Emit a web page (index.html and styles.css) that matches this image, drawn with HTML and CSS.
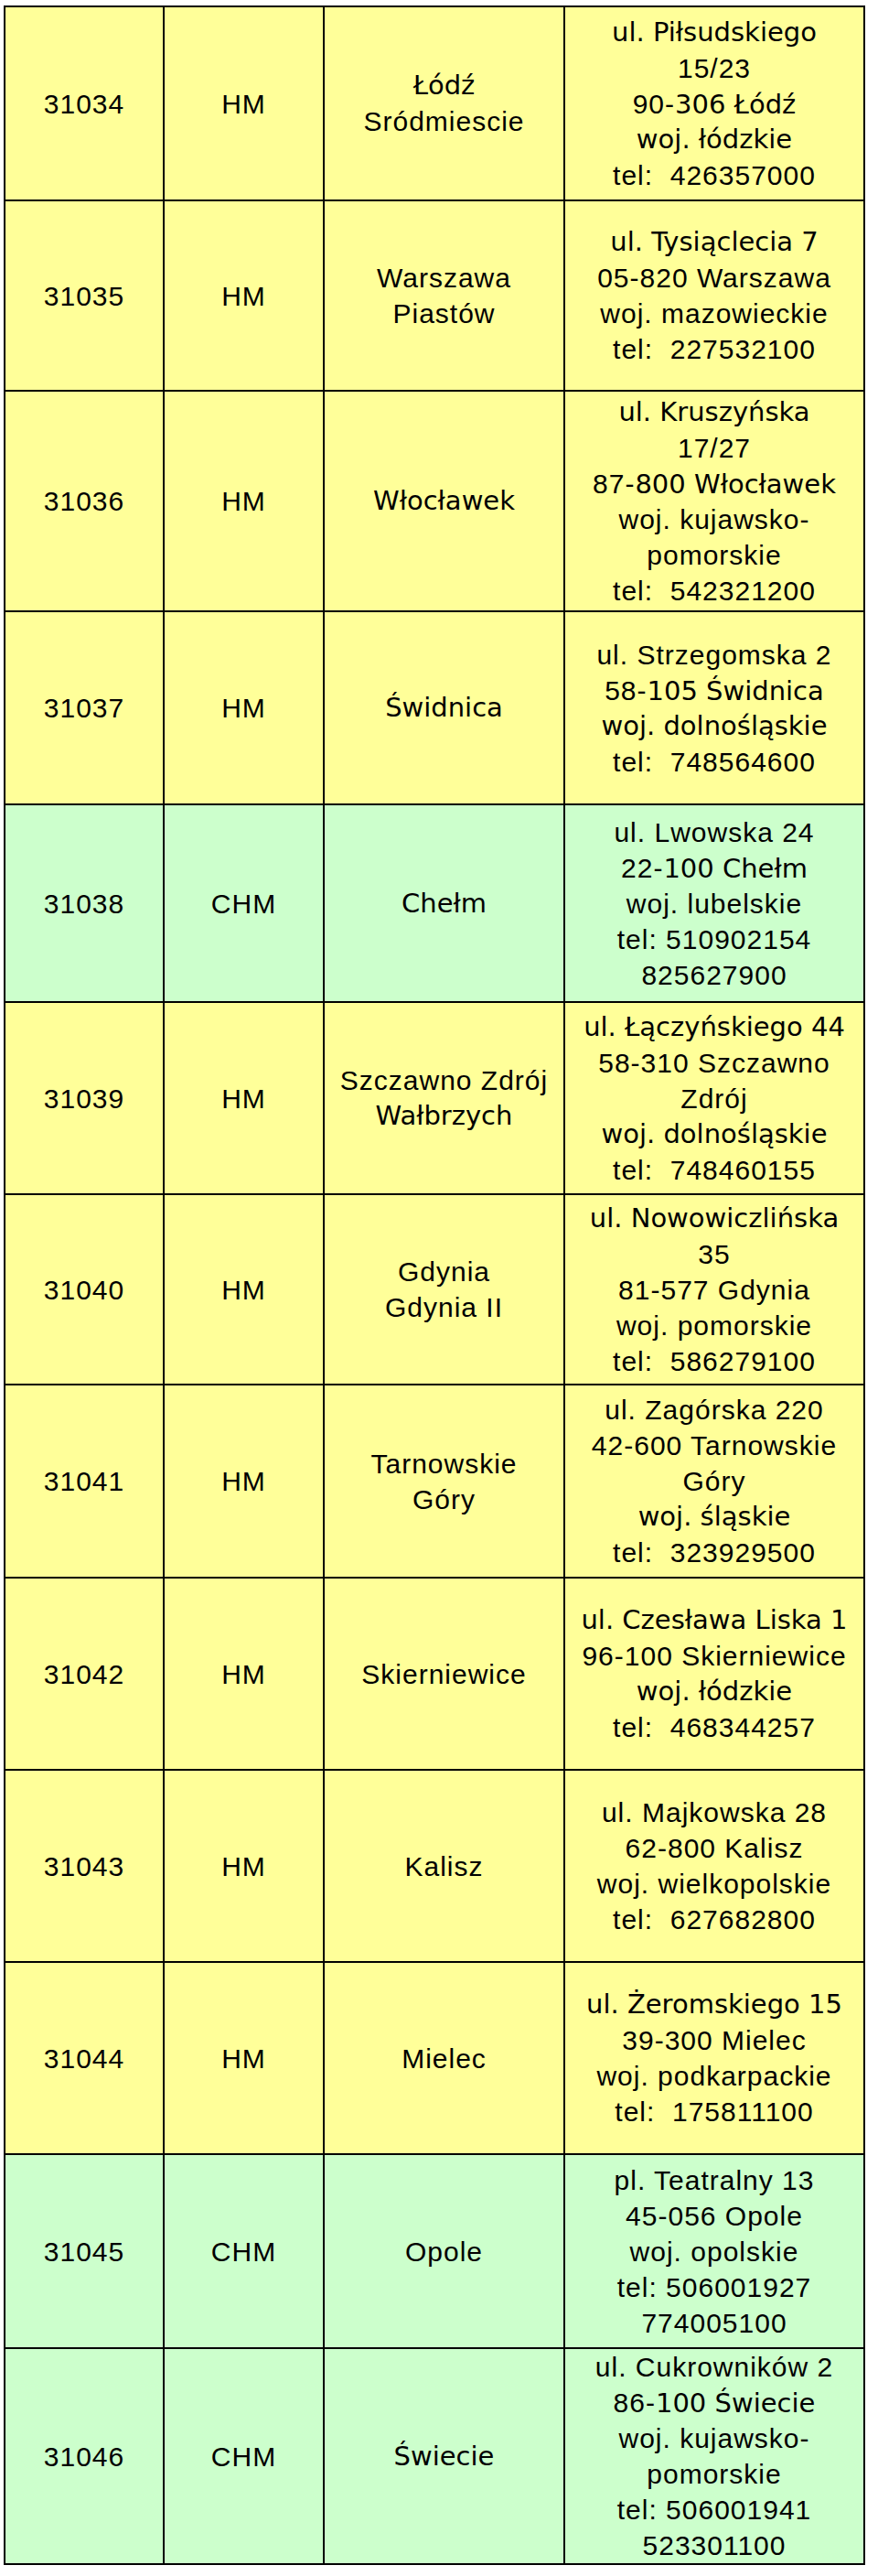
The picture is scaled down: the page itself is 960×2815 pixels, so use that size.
FILE: index.html
```html
<!DOCTYPE html>
<html lang="pl">
<head>
<meta charset="utf-8">
<title>Lista placówek</title>
<link rel="stylesheet" href="styles.css">
</head>
<body>
<div class="sheet">
  <div class="row yellow">
    <div class="cell">31034</div>
    <div class="cell">HM</div>
    <div class="cell"><div class="t">Łódź</div><div>Sródmiescie</div></div>
    <div class="cell addr">
      <div class="t">ul. Piłsudskiego</div>
      <div>15/23</div>
      <div>90-<span class="t">306 Łódź</span></div>
      <div class="t">woj. łódzkie</div>
      <div>tel:&nbsp; 426357000</div>
    </div>
  </div>
  <div class="row yellow">
    <div class="cell">31035</div>
    <div class="cell">HM</div>
    <div class="cell"><div>Warszawa</div><div>Piastów</div></div>
    <div class="cell addr">
      <div class="t">ul. Tysiąclecia 7</div>
      <div>05-820 Warszawa</div>
      <div>woj. mazowieckie</div>
      <div>tel:&nbsp; 227532100</div>
    </div>
  </div>
  <div class="row yellow">
    <div class="cell">31036</div>
    <div class="cell">HM</div>
    <div class="cell"><div class="t">Włocławek</div></div>
    <div class="cell addr">
      <div class="t">ul. Kruszyńska</div>
      <div>17/27</div>
      <div>87-<span class="t">800 Włocławek</span></div>
      <div>woj. kujawsko-</div>
      <div>pomorskie</div>
      <div>tel:&nbsp; 542321200</div>
    </div>
  </div>
  <div class="row yellow">
    <div class="cell">31037</div>
    <div class="cell">HM</div>
    <div class="cell"><div class="t">Świdnica</div></div>
    <div class="cell addr">
      <div>ul. Strzegomska 2</div>
      <div>58-<span class="t">105 Świdnica</span></div>
      <div class="t">woj. dolnośląskie</div>
      <div>tel:&nbsp; 748564600</div>
    </div>
  </div>
  <div class="row green">
    <div class="cell">31038</div>
    <div class="cell">CHM</div>
    <div class="cell"><div class="t">Chełm</div></div>
    <div class="cell addr">
      <div>ul. Lwowska 24</div>
      <div>22-<span class="t">100 Chełm</span></div>
      <div>woj. lubelskie</div>
      <div>tel: 510902154</div>
      <div>825627900</div>
    </div>
  </div>
  <div class="row yellow">
    <div class="cell">31039</div>
    <div class="cell">HM</div>
    <div class="cell"><div>Szczawno Zdrój</div><div class="t">Wałbrzych</div></div>
    <div class="cell addr">
      <div class="t">ul. Łączyńskiego 44</div>
      <div>58-310 Szczawno</div>
      <div>Zdrój</div>
      <div class="t">woj. dolnośląskie</div>
      <div>tel:&nbsp; 748460155</div>
    </div>
  </div>
  <div class="row yellow">
    <div class="cell">31040</div>
    <div class="cell">HM</div>
    <div class="cell"><div>Gdynia</div><div>Gdynia II</div></div>
    <div class="cell addr">
      <div class="t">ul. Nowowiczlińska</div>
      <div>35</div>
      <div>81-577 Gdynia</div>
      <div>woj. pomorskie</div>
      <div>tel:&nbsp; 586279100</div>
    </div>
  </div>
  <div class="row yellow">
    <div class="cell">31041</div>
    <div class="cell">HM</div>
    <div class="cell"><div>Tarnowskie</div><div>Góry</div></div>
    <div class="cell addr">
      <div>ul. Zagórska 220</div>
      <div>42-600 Tarnowskie</div>
      <div>Góry</div>
      <div class="t">woj. śląskie</div>
      <div>tel:&nbsp; 323929500</div>
    </div>
  </div>
  <div class="row yellow">
    <div class="cell">31042</div>
    <div class="cell">HM</div>
    <div class="cell"><div>Skierniewice</div></div>
    <div class="cell addr">
      <div class="t">ul. Czesława Liska 1</div>
      <div>96-100 Skierniewice</div>
      <div class="t">woj. łódzkie</div>
      <div>tel:&nbsp; 468344257</div>
    </div>
  </div>
  <div class="row yellow">
    <div class="cell">31043</div>
    <div class="cell">HM</div>
    <div class="cell"><div>Kalisz</div></div>
    <div class="cell addr">
      <div>ul. Majkowska 28</div>
      <div>62-800 Kalisz</div>
      <div>woj. wielkopolskie</div>
      <div>tel:&nbsp; 627682800</div>
    </div>
  </div>
  <div class="row yellow">
    <div class="cell">31044</div>
    <div class="cell">HM</div>
    <div class="cell"><div>Mielec</div></div>
    <div class="cell addr">
      <div class="t">ul. Żeromskiego 15</div>
      <div>39-300 Mielec</div>
      <div>woj. podkarpackie</div>
      <div>tel:&nbsp; 175811100</div>
    </div>
  </div>
  <div class="row green">
    <div class="cell">31045</div>
    <div class="cell">CHM</div>
    <div class="cell"><div>Opole</div></div>
    <div class="cell addr">
      <div>pl. Teatralny 13</div>
      <div>45-056 Opole</div>
      <div>woj. opolskie</div>
      <div>tel: 506001927</div>
      <div>774005100</div>
    </div>
  </div>
  <div class="row green">
    <div class="cell">31046</div>
    <div class="cell">CHM</div>
    <div class="cell"><div class="t">Świecie</div></div>
    <div class="cell addr">
      <div>ul. Cukrowników 2</div>
      <div>86-<span class="t">100 Świecie</span></div>
      <div>woj. kujawsko-</div>
      <div>pomorskie</div>
      <div>tel: 506001941</div>
      <div>523301100</div>
    </div>
  </div>
</div>
</body>
</html>
```

FILE: styles.css
```css
html, body {
  margin: 0;
  padding: 0;
  background: #ffffff;
}

.sheet {
  margin: 6px 0 0 4px;
  width: 942px;
  box-sizing: border-box;
  border-left: 2px solid #000;
  border-top: 2px solid #000;
  display: flex;
  flex-direction: column;
  font-family: "Liberation Sans", Arial, sans-serif;
  font-size: 30px;
  line-height: 39px;
  letter-spacing: 1px;
  color: #000;
}

.row {
  display: grid;
  grid-template-columns: 174px 175px 263px 328px;
  height: 210px;
}

.row:nth-child(1)  { height: 212px; }
.row:nth-child(2)  { height: 208px; }
.row:nth-child(3)  { height: 241px; }
.row:nth-child(4)  { height: 211px; }
.row:nth-child(5)  { height: 216px; }
.row:nth-child(6)  { height: 210px; }
.row:nth-child(7)  { height: 208px; }
.row:nth-child(8)  { height: 211px; }
.row:nth-child(9)  { height: 210px; }
.row:nth-child(10) { height: 210px; }
.row:nth-child(11) { height: 210px; }
.row:nth-child(12) { height: 212px; }
.row:nth-child(13) { height: 236px; }

.yellow { background: #ffff99; }
.green  { background: #ccffcc; }

.cell {
  box-sizing: border-box;
  border-right: 2px solid #000;
  border-bottom: 2px solid #000;
  display: flex;
  flex-direction: column;
  justify-content: center;
  align-items: center;
  text-align: center;
  white-space: nowrap;
  overflow: hidden;
}

.cell > div {
  line-height: 39px;
  height: 39px;
}

.t {
  font-family: "DejaVu Sans", Verdana, sans-serif;
  font-size: 29px;
  letter-spacing: 0;
}
```
